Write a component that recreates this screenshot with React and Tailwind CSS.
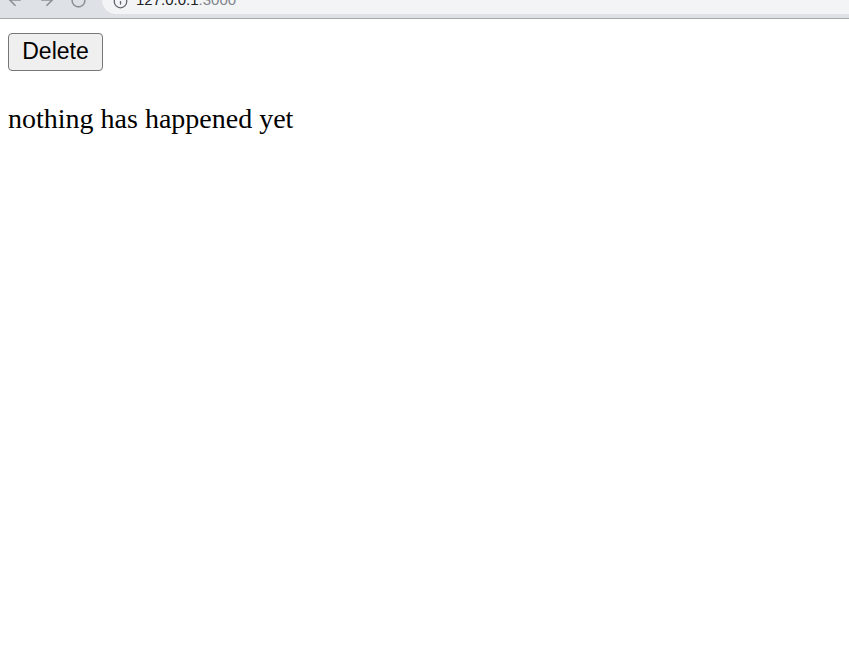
import { ArrowLeft, ArrowRight, RotateCw, Info } from 'lucide-react';

const App = () => {
    return (
        <div className="min-h-screen bg-white">
            {/* browser chrome, cut off at the top */}
            <div className="flex h-[19px] items-start overflow-hidden border-b border-[#a7a7a7] bg-[#dee1e6]">
                <div className="flex w-[102px] shrink-0 items-start gap-[14px] pl-[6px] text-[#8d9094]">
                    <ArrowLeft size={18} strokeWidth={2.2} className="-mt-[9px]" />
                    <ArrowRight size={18} strokeWidth={2.2} className="-mt-[9px]" />
                    <RotateCw size={17} strokeWidth={2.2} className="-mt-[8px]" />
                </div>
                <div className="flex h-[14px] flex-1 items-start gap-[8px] rounded-bl-[14px] bg-[#f3f4f6] pl-[11px]">
                    <Info size={15} strokeWidth={2} className="-mt-[6px] text-[#5f6368]" />
                    <span className="-mt-[8px] font-['Liberation_Sans',Arial,sans-serif] text-[15px] leading-none">
                        <span className="text-[#202124]">127.0.0.1</span>
                        <span className="text-[#80868b]">:3000</span>
                    </span>
                </div>
            </div>

            <div className="px-2 pt-[14px]">
                <button className="flex h-[38px] w-[95px] items-center justify-center rounded-[4px] border border-[#767676] bg-[#efefef] pb-[2px] font-['Liberation_Sans',Arial,sans-serif] text-[23px] text-black">
                    Delete
                </button>
                <p className="mt-[32px] font-['Liberation_Serif','Times_New_Roman',serif] text-[28px] leading-[32px] text-black">
                    nothing has happened yet
                </p>
            </div>
        </div>
    );
};

export default App;
